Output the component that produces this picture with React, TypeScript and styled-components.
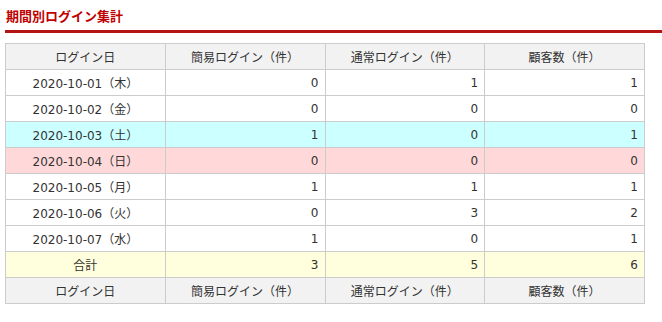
import styled, { createGlobalStyle } from "styled-components";

const GlobalStyle = createGlobalStyle`
  body {
    margin: 0;
    background: #fff;
    font-family: "DejaVu Sans", "Noto Sans CJK JP", sans-serif;
    color: #333;
  }
`;

const Wrapper = styled.div`
  padding-left: 5px;
`;

const Title = styled.h2`
  margin: 0;
  padding: 8px 0 6px 1px;
  font-size: 13px;
  line-height: 16px;
  font-weight: bold;
  color: #c00000;
  font-family: "Noto Sans CJK JP", sans-serif;
  border-bottom: 3px solid #b41414;
`;

const Table = styled.table`
  margin-top: 10px;
  width: 640px;
  border-collapse: collapse;
  table-layout: fixed;
  font-size: 12px;
`;

const Row = styled.tr<{ $bg?: string }>`
  background: ${(p) => p.$bg || "#fff"};
`;

const HeadCell = styled.th`
  height: 25px;
  padding: 0;
  border: 1px solid #ccc;
  background: #f2f2f2;
  font-weight: normal;
  text-align: center;
`;

const Cell = styled.td<{ $center?: boolean }>`
  height: 25px;
  padding: 0 6px;
  border: 1px solid #ccc;
  text-align: ${(p) => (p.$center ? "center" : "right")};
`;

const headers = ["ログイン日", "簡易ログイン（件）", "通常ログイン（件）", "顧客数（件）"];

const rows = [
  { date: "2020-10-01（木）", v: [0, 1, 1] },
  { date: "2020-10-02（金）", v: [0, 0, 0] },
  { date: "2020-10-03（土）", v: [1, 0, 1], bg: "#ccffff" },
  { date: "2020-10-04（日）", v: [0, 0, 0], bg: "#ffd9d9" },
  { date: "2020-10-05（月）", v: [1, 1, 1] },
  { date: "2020-10-06（火）", v: [0, 3, 2] },
  { date: "2020-10-07（水）", v: [1, 0, 1] },
];

function HeaderRow() {
  return (
    <tr>
      {headers.map((h) => (
        <HeadCell key={h}>{h}</HeadCell>
      ))}
    </tr>
  );
}

export default function App() {
  return (
    <Wrapper>
      <GlobalStyle />
      <Title>期間別ログイン集計</Title>
      <Table>
        <thead>
          <HeaderRow />
        </thead>
        <tbody>
          {rows.map((r) => (
            <Row key={r.date} $bg={r.bg}>
              <Cell $center>{r.date}</Cell>
              {r.v.map((n, i) => (
                <Cell key={i}>{n}</Cell>
              ))}
            </Row>
          ))}
          <Row $bg="#ffffdd">
            <Cell $center>合計</Cell>
            <Cell>3</Cell>
            <Cell>5</Cell>
            <Cell>6</Cell>
          </Row>
        </tbody>
        <tfoot>
          <HeaderRow />
        </tfoot>
      </Table>
    </Wrapper>
  );
}
